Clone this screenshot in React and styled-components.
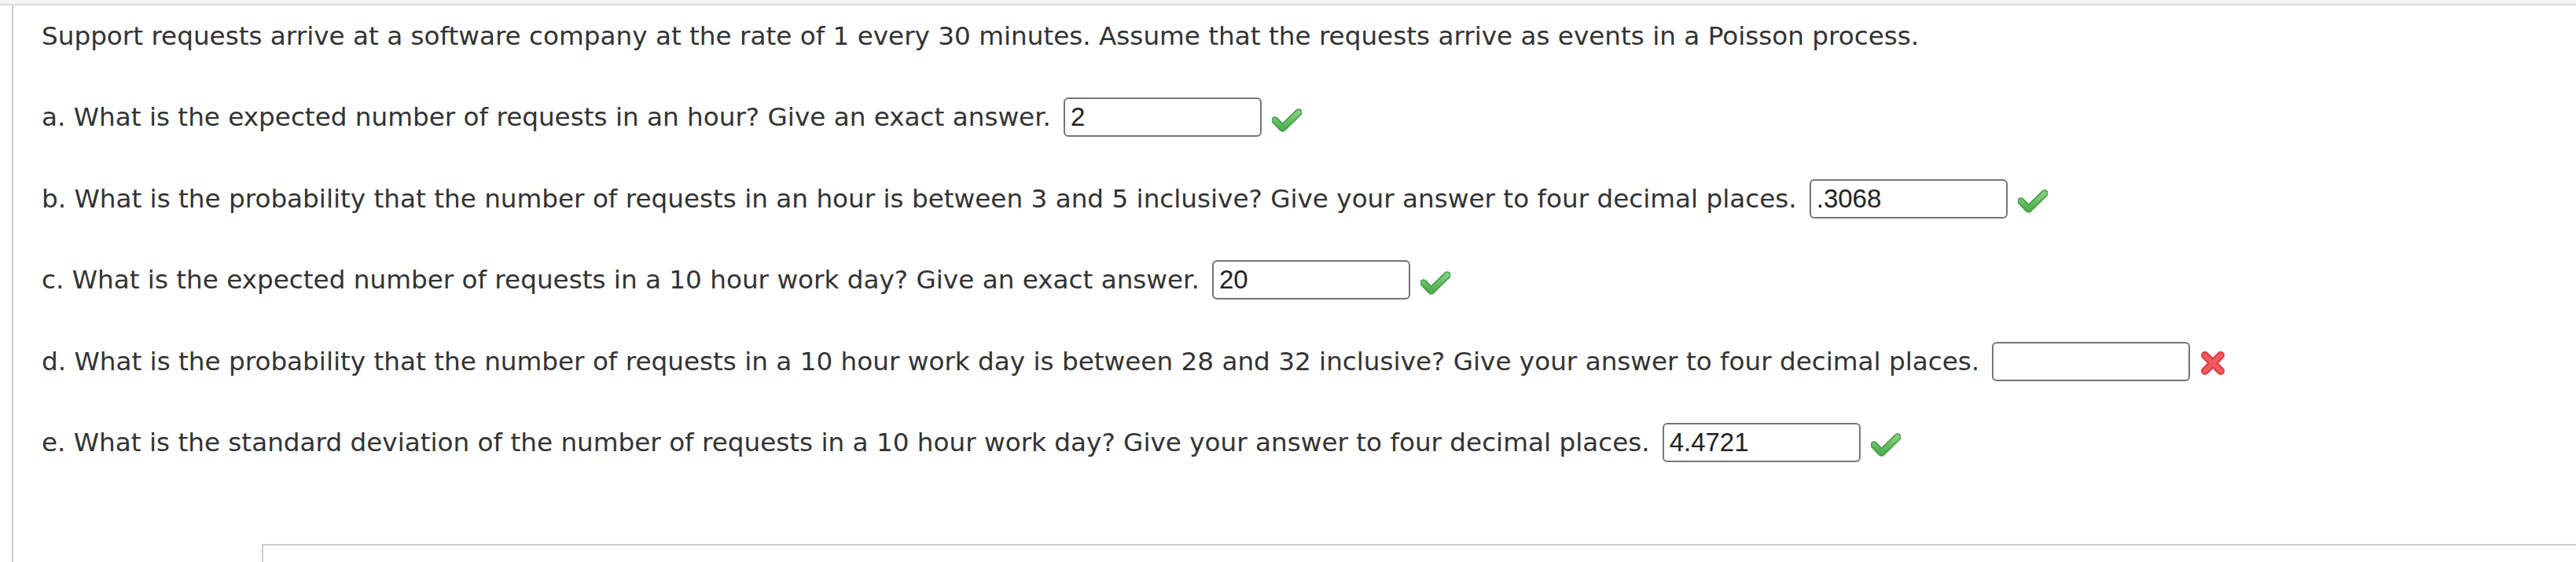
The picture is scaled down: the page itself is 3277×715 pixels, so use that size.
import styled, { createGlobalStyle } from "styled-components";

const GlobalStyle = createGlobalStyle`
  html, body {
    margin: 0;
    padding: 0;
    background: #fff;
  }
`;

const questions = [
  { id: "a", text: "a. What is the expected number of requests in an hour? Give an exact answer.", value: "2", ok: true },
  { id: "b", text: "b. What is the probability that the number of requests in an hour is between 3 and 5 inclusive? Give your answer to four decimal places.", value: ".3068", ok: true },
  { id: "c", text: "c. What is the expected number of requests in a 10 hour work day? Give an exact answer.", value: "20", ok: true },
  { id: "d", text: "d. What is the probability that the number of requests in a 10 hour work day is between 28 and 32 inclusive? Give your answer to four decimal places.", value: "", ok: false },
  { id: "e", text: "e. What is the standard deviation of the number of requests in a 10 hour work day? Give your answer to four decimal places.", value: "4.4721", ok: true },
];

const CheckIcon = () => (
  <svg width="38" height="31" viewBox="0 0 38 31">
    <defs>
      <linearGradient id="chk" x1="0" y1="0" x2="0" y2="1">
        <stop offset="0" stopColor="#82d182" />
        <stop offset="1" stopColor="#4fae4f" />
      </linearGradient>
    </defs>
    <path d="M4 15 L13.5 25 L34 5" fill="none" stroke="#4a9e4a" strokeWidth="9.5" strokeLinecap="round" strokeLinejoin="round" />
    <path d="M4 15 L13.5 25 L34 5" fill="none" stroke="url(#chk)" strokeWidth="6" strokeLinecap="round" strokeLinejoin="round" />
  </svg>
);

const CrossIcon = () => (
  <svg width="34" height="34" viewBox="0 0 34 34">
    <path d="M7 7 L27 27 M27 7 L7 27" fill="none" stroke="#e0393e" strokeWidth="10" strokeLinecap="round" />
    <path d="M7 7 L27 27 M27 7 L7 27" fill="none" stroke="#f2585d" strokeWidth="6" strokeLinecap="round" />
  </svg>
);

export default function App() {
  return (
    <>
      <GlobalStyle />
      <TopBar />
      <Main>
        <Content>
          <Line>
            Support requests arrive at a software company at the rate of 1 every 30 minutes. Assume that the
            requests arrive as events in a Poisson process.
          </Line>
          {questions.map((q) => (
            <Row key={q.id}>
              <Line>{q.text}</Line>
              <AnswerBox defaultValue={q.value} />
              <Mark $ok={q.ok}>{q.ok ? <CheckIcon /> : <CrossIcon />}</Mark>
            </Row>
          ))}
          <BottomPanel />
        </Content>
      </Main>
    </>
  );
}

const TopBar = styled.div`
  height: 5px;
  background: #f5f5f5;
  border-bottom: 2px solid #dddddd;
`;

const Main = styled.div`
  margin-left: 15px;
  border-left: 2px solid #cccccc;
  min-height: 708px;
`;

const Content = styled.div`
  display: flex;
  flex-direction: column;
  gap: 53.4px;
  padding: 14px 0 0 36px;
  font-family: "DejaVu Sans", Verdana, sans-serif;
  font-size: 32.65px;
  color: #333333;
`;

const Line = styled.div`
  height: 50px;
  line-height: 50px;
  white-space: nowrap;
`;

const Row = styled.div`
  display: flex;
  align-items: center;
  height: 50px;
`;

const AnswerBox = styled.input`
  box-sizing: border-box;
  width: 252px;
  height: 50px;
  margin-left: 16px;
  padding: 0 7px;
  border: 2px solid #767676;
  border-radius: 6px;
  font-family: "Liberation Sans", Arial, sans-serif;
  font-size: 33px;
  color: #222;
  background: #fff;
  outline: none;
`;

const Mark = styled.span`
  display: flex;
  margin-left: ${(p) => (p.$ok ? "13px" : "12px")};
  margin-top: ${(p) => (p.$ok ? "8px" : "4px")};
`;

const BottomPanel = styled.div`
  margin: 50.6px 0 0 280px;
  height: 40px;
  border-top: 2px solid #cccccc;
  border-left: 2px solid #cccccc;
`;
